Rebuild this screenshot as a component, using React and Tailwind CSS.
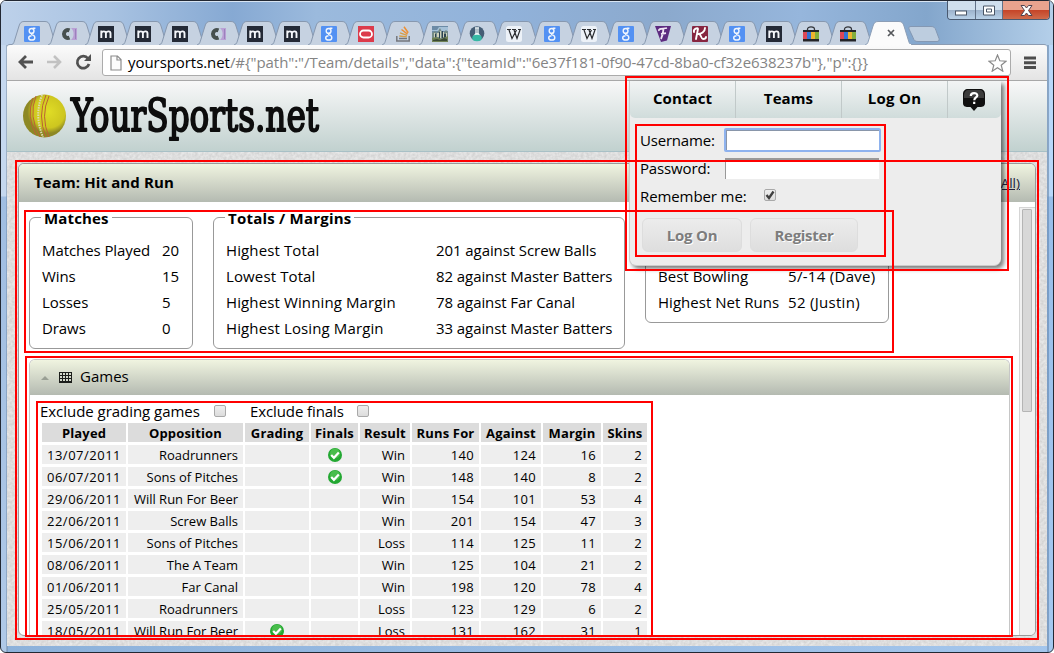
import React from "react";

const tabIcons = ["g", "c", "m", "m", "m", "c", "m", "m", "g", "o", "so", "pic", "flask", "w", "g", "w", "g", "f", "k", "g", "m", "shop", "shop"];

function Favicon({ kind }) {
  const svg = (children) => (
    <svg width="16" height="16" viewBox="0 0 16 16" className="block">
      {children}
    </svg>
  );
  if (kind === "g")
    return svg(
      <>
        <rect width="16" height="16" rx="1" fill="#5391f3" />
        <g fill="none" stroke="#f0f5fd" strokeWidth="1.4">
          <ellipse cx="7.6" cy="4.9" rx="2.4" ry="2.4" />
          <path d="M8.600 2.300h2.800M9.400 6.800C7 8 7 8.500 8.800 9.200c3 1.100 2.600 4.800-1 4.800-4 0-4.200-3.700-.3-4.200" />
        </g>
      </>
    );
  if (kind === "c")
    return svg(
      <>
        <path d="M10 2h6v12h-6c3.500-3 3.500-9 0-12z" fill="#b9a0d4" />
        <path d="M14.500 3v10" stroke="#9c80bd" />
        <path d="M8.500 4.300A4 4 0 1 0 8.500 11.700" fill="none" stroke="#47504f" strokeWidth="4" />
      </>
    );
  if (kind === "m")
    return svg(
      <>
        <rect width="16" height="16" fill="#242a36" />
        <path d="M3.300 12V4.500M3.300 7C4.500 4.800 7.500 4.800 7.900 7v5M7.900 7C9 4.800 12.500 4.800 12.500 7.500V12" fill="none" stroke="#f4f6fa" strokeWidth="1.900" />
      </>
    );
  if (kind === "o")
    return svg(
      <>
        <rect width="16" height="16" fill="#dc3b4b" />
        <rect x="2" y="4.500" width="12" height="7" rx="3.500" fill="none" stroke="#fff" strokeWidth="1.800" />
      </>
    );
  if (kind === "so")
    return svg(
      <>
        <path d="M1.800 10v5h12.400v-5" fill="none" stroke="#74777c" strokeWidth="1.500" />
        <path d="M4 12.500h8" stroke="#74777c" strokeWidth="1.700" />
        <path d="M4.300 10l7.600.9M5 6.900l7.100 2.500" stroke="#d59e49" strokeWidth="1.400" />
        <path d="M6.500 3.500l6 4.600M9 .7l4.200 6" stroke="#ed9034" strokeWidth="1.500" />
      </>
    );
  if (kind === "pic")
    return svg(
      <>
        <rect width="16" height="16" fill="#6c8ba6" />
        <path d="M0 4h5l2-3h9v4H0z" fill="#a5c1d8" />
        <path d="M0 7l3-2 2 2 3-5 2 4h2l2-2 2 2v10H0z" fill="#758b86" />
        <path d="M2 7h1v6H2zM5 7h2v4H5zM8 5h1v7H8zM11 6h1v5h-1zM14 7h1v4h-1z" fill="#cdd1bb" />
        <path d="M3 8h1v4H3zM7 6h1v7H7zM10 5h1v7h-1zM12 8h2v5h-2z" fill="#2c4352" />
        <path d="M0 12l4-1 5 2 7-3v6H0z" fill="#6f8155" />
        <path d="M1 14l4-1 3 1 4-2 3 1v2H1z" fill="#3a4a36" />
      </>
    );
  if (kind === "flask")
    return svg(
      <>
        <circle cx="8" cy="7.500" r="7.300" fill="#455d75" />
        <path d="M6 1.800h4M7 2.500v5L4.500 11M9 2.500v5l2.500 3.500" fill="none" stroke="#edf6f7" strokeWidth="1.300" />
        <path d="M7.200 7h1.600l2.500 4H4.700z" fill="#edf6f7" />
        <ellipse cx="8" cy="12" rx="4.800" ry="3.200" fill="#36b8a4" />
      </>
    );
  if (kind === "w")
    return svg(
      <>
        <rect width="16" height="16" rx="2.500" fill="#edf2f8" />
        <path d="M1 3.500h4M6 3.500h4M12 3.500h3M3 4l3 8.500L10.500 4M8 4l3 8.500L14 4" fill="none" stroke="#292b2f" strokeWidth="1.200" />
      </>
    );
  if (kind === "f")
    return svg(
      <>
        <path d="M0 0h16l-4 14.500-6 1.500z" fill="#5d2b80" />
        <path d="M4 5c-1-3 4-2 8-3M8.500 3C8 8 7 11 6 13M6 8l5-.800" fill="none" stroke="#f0e6f5" strokeWidth="1.800" />
      </>
    );
  if (kind === "k")
    return svg(
      <>
        <rect width="16" height="16" rx="1" fill="#872540" />
        <path d="M2 6C1 3 6 1 6 3L4 13M13 2C13 6 9 8 6 8M7 8c2 0 2 5 4 5s3-1 3-2" fill="none" stroke="#fff" strokeWidth="1.900" strokeLinecap="round" />
      </>
    );
  return svg(
    <>
      <path d="M4.500 5V3.500C4.500 0 11.500 0 11.500 3.500V5" fill="none" stroke="#34363c" strokeWidth="1.300" />
      <path d="M0 4h16v11.500H0z" fill="#242529" />
      <path d="M0 6h4v7H0z" fill="#dd4856" />
      <path d="M4 6h4v7H4z" fill="#3374d6" />
      <path d="M8 6h4v7H8z" fill="#eeb42e" />
      <path d="M12 6h4v7h-4z" fill="#83ae3c" />
    </>
  );
}

function Tab({ kind, active }) {
  return (
    <div className={active ? "relative z-10 -mr-[4px] h-6 w-[47px] shrink-0" : "relative -mr-[9.9px] h-6 w-[47px] shrink-0"}>
      <svg width="47" height="24" viewBox="0 0 47 24" className="absolute inset-0">
        <path
          d="M0 24C3 23 3 21 4 18L8 5C9 2 10 .500 13 .500H34C37 .500 38 2 39 5L43 18C44 21 44 23 47 24"
          fill={active ? "#fbfbfb" : "#c6d2e1"}
          stroke={active ? "#8c9eb6" : "#8798af"}
          strokeWidth="1"
        />
        {active && <path d="M2 24h44" stroke="#fbfbfb" strokeWidth="2" />}
      </svg>
      <div className="relative flex h-full items-center pl-[13px] pt-px">
        {active ? (
          <svg width="8" height="8" viewBox="0 0 8 8" className="ml-[9px] -mt-px">
            <path d="M1 1l6 6M7 1l-6 6" stroke="#55575b" strokeWidth="1.700" />
          </svg>
        ) : (
          <Favicon kind={kind} />
        )}
      </div>
    </div>
  );
}

function TitleBar() {
  return (
    <div className="flex h-[44px] items-end bg-[linear-gradient(90deg,#bdd1ea_0%,#a9c3e2_10%,#86a9d3_22%,#9bbadd_30%,#91b2da_48%,#8ba9cd_63%,#96b6dc_76%,#83a6cc_88%,#b4cfe9_100%)] pl-[10px] shadow-[inset_0_1px_0_#d8e5f3]">
      <div className="flex flex-1">
        {tabIcons.map((kind, i) => (
          <Tab kind={kind} key={i} />
        ))}
        <Tab active />
        <svg width="32" height="16" viewBox="0 0 32 16" className="mt-[5px] shrink-0">
          <path d="M3 .500h20c3 0 4 1 5 4l3 8c.500 2-.500 3-2 3H10c-3 0-4-1-5-4L1 3C.500 1.500 1 .500 3 .500z" fill="#bdcddf" stroke="#8498b3" />
        </svg>
      </div>
      <div className="mr-[3px] flex h-[19px] w-[103px] shrink-0 self-start overflow-hidden rounded-b-[4px] border border-t-0 border-[#49596f] -ml-[103px]">
        <div className="flex w-7 items-center justify-center border-r border-[#617187] bg-[linear-gradient(#d0dfed_0_48%,#9cb2cb_50%,#b9d1e8)] pt-[6px]">
          <svg width="13" height="6"><rect x=".500" y="1" width="11" height="4" fill="#fff" stroke="#4a5666" /></svg>
        </div>
        <div className="flex w-[27px] items-center justify-center border-r border-[#617187] bg-[linear-gradient(#d0dfed_0_48%,#9cb2cb_50%,#b9d1e8)] pt-px">
          <svg width="13" height="11"><path d="M.500 1h11v9H.500zM3.500 4h5v3h-5z" fill="#fff" stroke="#4a5666" /></svg>
        </div>
        <div className="flex flex-1 items-center justify-center bg-[linear-gradient(#e9a38e_0_48%,#c54327_50%,#cf6b4b)] pt-px">
          <svg width="13" height="11" viewBox="0 0 13 11">
            <path d="M1 .500h3.500l2 2.500 2-2.500H12L8.500 5.500 12 10.500H8.500l-2-2.500-2 2.500H1L4.500 5.500z" fill="#fff" stroke="#50434f" />
          </svg>
        </div>
      </div>
    </div>
  );
}

function Toolbar() {
  return (
    <div className="flex h-[37px] items-start rounded-t-[3px] border-b border-t border-b-[#a8a8a8] border-t-[#8b9bb1] bg-[linear-gradient(#fbfbfb,#e4e4e4)] pl-[10px] pt-[4px]">
      <svg width="76" height="26" viewBox="0 0 76 26" fill="none" className="mr-[9px]">
        <path d="M16 13H3M9 7l-6 6 6 6" stroke="#515151" strokeWidth="2.800" />
        <path d="M30 13h13M37 7l6 6-6 6" stroke="#c2c2c2" strokeWidth="2.600" />
        <path d="M71 9.500A6 6 0 1 0 72 15" stroke="#515151" strokeWidth="2.700" />
        <path d="M74 5v7h-7z" fill="#515151" />
      </svg>
      <div className="flex h-[27px] w-[909px] items-center rounded-[3px] border border-[#ababab] bg-white pl-[7px] pr-[3px]">
        <svg width="12" height="16" viewBox="0 0 12 16" className="mr-[6px]">
          <path d="M1 1h6.500L11 4.500V15H1zM7 1v4h4" fill="#fcfcfc" stroke="#8c8c8c" strokeWidth="1.200" />
        </svg>
        <span className="flex-1 whitespace-pre pb-[2px] text-[15px] leading-[20px] tracking-[-0.060px] text-[#848484]">
          <span className="text-black">yoursports.net</span>
          {'/#{"path":"/Team/details","data":{"teamId":"6e37f181-0f90-47cd-8ba0-cf32e638237b"},"p":{}}'}
        </span>
        <svg width="19" height="18" viewBox="0 0 19 18">
          <path d="M9.500 1l2.300 5.800 6.200.400-4.800 4 1.600 6-5.300-3.400-5.300 3.400 1.600-6-4.800-4 6.200-.400z" fill="#fff" stroke="#8a8a8a" strokeWidth="1.200" />
        </svg>
      </div>
      <svg width="14" height="14" className="ml-[12px] mt-[7px]">
        <path d="M1 2h12M1 6.800h12M1 11.600h12" stroke="#4d4d4d" strokeWidth="3" />
      </svg>
    </div>
  );
}

function SiteHeader() {
  return (
    <header className="relative flex h-[71px] items-start border-b border-[#a8c0c6] bg-[linear-gradient(#f8f8f8,#c1d1cf)] pl-4 pt-[13px]">
      <svg width="310" height="56" viewBox="0 0 310 56">
        <defs>
          <radialGradient id="ball" cx=".6" cy=".4">
            <stop offset="0" stopColor="#e0dc26" />
            <stop offset=".75" stopColor="#cdc61f" />
            <stop offset="1" stopColor="#8d8824" />
          </radialGradient>
          <filter id="worn" x="-5%" y="-10%" width="110%" height="120%">
            <feTurbulence type="fractalNoise" baseFrequency=".5" numOctaves="2" result="n" />
            <feDisplacementMap in="SourceGraphic" in2="n" scale="1.500" xChannelSelector="R" yChannelSelector="G" />
          </filter>
        </defs>
        <circle cx="21.500" cy="22" r="21.500" fill="url(#ball)" />
        <g fill="none">
          <path d="M10 4Q3 22 13 41M13 2Q5 22 17 43M23 1Q14 22 23 43M26 2Q17 22 26 43" stroke="#bc6135" strokeWidth="1" />
          <path d="M19 1Q11 22 20 43" stroke="#ddd9b2" strokeWidth="2" strokeDasharray="1.500 1" />
        </g>
        <text x="48" y="37" fontFamily="DejaVu Serif" fontSize="44" textLength="248" lengthAdjust="spacingAndGlyphs" fill="#080808" stroke="#080808" strokeWidth="2" strokeLinejoin="round" filter="url(#worn)">YourSports.net</text>
      </svg>
    </header>
  );
}

function StatBox({ title, rows, className, first, second = "", legend = "" }) {
  return (
    <fieldset className={"rounded-[6px] border border-[#999] pl-3 " + className}>
      {title && <legend className={"-ml-px h-[16px] whitespace-nowrap px-[3px] text-[15px] font-bold leading-[18px] " + legend}>{title}</legend>}
      <div className={title ? "mt-[12px]" : "mt-[53px]"}>
        {rows.map(([a, b], i) => (
          <div key={i} className="flex h-[26px] items-center whitespace-nowrap text-[15px]">
            <span className={first}>{a}</span>
            <span className={second}>{b}</span>
          </div>
        ))}
      </div>
    </fieldset>
  );
}

function Tick() {
  return (
    <svg width="16" height="16" viewBox="0 0 16 16" className="inline-block">
      <circle cx="8" cy="8" r="7" fill="#23a832" />
      <circle cx="8" cy="6.500" r="5" fill="#49bd4c" />
      <path d="M4.200 8l2.700 2.800L11.800 5.500" fill="none" stroke="#fff" strokeWidth="2.200" />
    </svg>
  );
}

function Check({ checked }) {
  return (
    <span className="mb-[2px] inline-flex h-3 w-3 shrink-0 items-center justify-center rounded-[2px] border border-[#a9a9a9] bg-[linear-gradient(#eee,#dcdcdc)]">
      {checked && (
        <svg width="10" height="10" viewBox="0 0 10 10">
          <path d="M1.500 5l2.500 3L8.500 1.500" fill="none" stroke="#3f3f3f" strokeWidth="2.300" />
        </svg>
      )}
    </span>
  );
}

const columns = ["Played", "Opposition", "Grading", "Finals", "Result", "Runs For", "Against", "Margin", "Skins"];
const games = [
  ["13/07/2011", "Roadrunners", "", "t", "Win", 140, 124, 16, 2],
  ["06/07/2011", "Sons of Pitches", "", "t", "Win", 148, 140, 8, 2],
  ["29/06/2011", "Will Run For Beer", "", "", "Win", 154, 101, 53, 4],
  ["22/06/2011", "Screw Balls", "", "", "Win", 201, 154, 47, 3],
  ["15/06/2011", "Sons of Pitches", "", "", "Loss", 114, 125, 11, 2],
  ["08/06/2011", "The A Team", "", "", "Win", 125, 104, 21, 2],
  ["01/06/2011", "Far Canal", "", "", "Win", 198, 120, 78, 4],
  ["25/05/2011", "Roadrunners", "", "", "Loss", 123, 129, 6, 2],
  ["18/05/2011", "Will Run For Beer", "t", "", "Loss", 131, 162, 31, 1],
];

function cellClass(i) {
  if (i === 2 || i === 3) return "flex items-center justify-center";
  if (i === 0) return "pr-[5px] text-right tracking-[0.5px]";
  if (i > 4) return "pr-[5px] text-right tracking-[0.35px]";
  return "pr-[5px] text-right";
}

function Games() {
  return (
    <section className="mt-[10px] w-[981px] rounded-t-[6px] border border-b-0 border-[#c6c6c6]">
      <h2 className="flex h-[35px] items-center rounded-t-[5px] bg-[linear-gradient(#f0f4e0,#b4bab1)] pl-[11px] text-[15px]">
        <svg width="8" height="4" className="mr-[10px]"><path d="M0 4l4-4 4 4z" fill="#999f94" /></svg>
        <svg width="13" height="11" className="mr-[8px]">
          <rect width="13" height="11" fill="#1c1e1b" />
          <path d="M1 1h2v2H1zM4 1h2v2H4zM7 1h2v2H7zM10 1h2v2h-2zM1 4h2v2H1zM4 4h2v2H4zM7 4h2v2H7zM10 4h2v2h-2zM1 7h2v2H1zM4 7h2v2H4zM7 7h2v2H7zM10 7h2v2h-2z" fill="#d5dacc" />
        </svg>
        <span className="pb-[2px]">Games</span>
      </h2>
      <div className="pl-[10px] pt-[7px]">
        <div className="flex h-[19px] items-center text-[15px] leading-[19px]">
          <span className="w-[174px] tracking-[-0.040px]">Exclude grading games</span>
          <Check />
          <span className="ml-6 w-[107px] tracking-[-0.100px]">Exclude finals</span>
          <Check />
        </div>
        <div className="ml-[2px] mt-[2px] grid w-[605px] grid-cols-[84px_115px_64px_47px_50px_67px_60px_58px_44px] gap-x-[2px] gap-y-[3px] text-[13px] leading-[21px]">
          {columns.map((c) => (
            <div key={c} className="h-[19px] whitespace-nowrap bg-[#dcdcdc] text-center font-bold tracking-[0.15px]">{c}</div>
          ))}
          {games.map((row, r) =>
            row.map((v, i) => (
              <div key={r + "-" + i} className={"h-[19px] whitespace-nowrap bg-[#eee] " + cellClass(i)}>
                {v === "t" ? <Tick /> : v}
              </div>
            ))
          )}
        </div>
      </div>
    </section>
  );
}

function TeamPanel() {
  return (
    <main className="relative mx-[11px] mt-[11px] h-[473px] w-[1018px] overflow-hidden rounded-[6px] border border-[#999] bg-white">
      <div className="flex h-[38px] items-center justify-between bg-[linear-gradient(#f0f4e0,#b4bab1)] pl-[15px] pr-[15px] text-[15px]">
        <h1 className="pb-[2px] font-bold tracking-[0.120px]">Team: Hit and Run</h1>
        <a className="pt-px text-[13.5px] text-[#20203a] underline">(All)</a>
      </div>
      <div className="flex justify-between">
        <div className="h-[434px] overflow-hidden pl-[10px] pt-[7px]">
          <div className="flex items-start">
            <StatBox title="Matches" legend="tracking-[0.150px]" className="mr-5 h-[140px] w-[164px]" first="w-[120px] tracking-[-0.080px]" rows={[["Matches Played", 20], ["Wins", 15], ["Losses", 5], ["Draws", 0]]} />
            <StatBox title="Totals / Margins" legend="tracking-[0.220px]" className="mr-5 h-[140px] w-[412px]" first="w-[210px] tracking-[0.120px]" second="tracking-[-0.080px]" rows={[["Highest Total", "201 against Screw Balls"], ["Lowest Total", "82 against Master Batters"], ["Highest Winning Margin", "78 against Far Canal"], ["Highest Losing Margin", "33 against Master Batters"]]} />
            <StatBox className="h-[114px] w-[244px]" first="w-[130px] tracking-[0.030px]" second="tracking-[0.300px]" rows={[["Best Bowling", "5/-14 (Dave)"], ["Highest Net Runs", "52 (Justin)"]]} />
          </div>
          <Games />
        </div>
        <div className="mt-[5px] h-[428px] w-[16px] border-l border-t border-[#d5d5d5] bg-[#f1f1f1] pl-[2px] pt-px">
          <div className="h-[203px] w-[10px] rounded-[1px] border border-[#b5b5b5] bg-[#d8d8d8]" />
        </div>
      </div>
    </main>
  );
}

function LogonMenu() {
  const tab = "flex items-center justify-center border-r border-[#c1c9c9] pb-[2px] text-[15px] font-bold";
  return (
    <aside className="absolute left-[629px] top-[81px] h-[185px] w-[372px] rounded-b-[7px] border-b border-l border-[#ccc] bg-[#ededed] shadow-[3px_3px_4px_rgba(0,0,0,0.5)]">
      <nav className="flex h-[37px] rounded-b-[5px] bg-[linear-gradient(#f2f4f4,#d0dcdb)]">
        <a className={tab + " w-[106px] tracking-[0.100px]"}>Contact</a>
        <a className={tab + " w-[106px] tracking-[0.100px]"}>Teams</a>
        <a className={tab + " w-[106px] tracking-[0.300px]"}>Log On</a>
        <a className="flex flex-1 items-center justify-center pr-[2px]">
          <svg width="22" height="22" viewBox="0 0 22 22">
            <path d="M5 0h12c3 0 5 2 5 5v9c0 3-2 4-5 4h-2.500L11 22l-3.500-4H5c-3 0-5-1-5-4V5c0-3 2-5 5-5z" fill="#101010" />
            <path d="M1 6c0-3 2-5 4-5h12c2 0 4 2 4 5v3H1z" fill="#3c3c3c" />
            <path d="M7.800 7c0-4 6.500-3.600 6.500-.600 0 2-3 2.200-3 4.800M11.200 12.800v2.200" fill="none" stroke="#fff" strokeWidth="2.200" />
          </svg>
        </a>
      </nav>
      <form className="pl-[10px] pt-[8px] text-[15px]">
        <div className="flex h-7 items-center">
          <label className="w-[84px] tracking-[-0.200px]">Username:</label>
          <div className="h-[24px] w-[157px] rounded-[2px] border-2 border-[#8eb2ee] bg-white shadow-[inset_1px_1px_0_#8996aa]" />
        </div>
        <div className="flex h-7 items-center">
          <label className="w-[85px] tracking-[-0.150px]">Password:</label>
          <div className="h-[21px] w-[154px] border-l border-t-2 border-[#999] bg-white" />
        </div>
        <div className="flex h-7 items-center">
          <label className="w-[124px] tracking-[-0.100px]">Remember me:</label>
          <Check checked />
        </div>
        <div className="mt-[8px] flex gap-2 pl-[2px] font-bold text-[#7d7d7d]">
          <div className="flex h-[34px] w-[100px] items-center justify-center rounded-[6px] border border-[#ddd] bg-[linear-gradient(#ececec,#dedede)] tracking-[-0.2px] [text-shadow:1px_1px_0_#fff]">Log On</div>
          <div className="flex h-[34px] w-[108px] items-center justify-center rounded-[6px] border border-[#ddd] bg-[linear-gradient(#ececec,#dedede)] tracking-[-0.3px] [text-shadow:1px_1px_0_#fff]">Register</div>
        </div>
      </form>
    </aside>
  );
}

export default function App() {
  return (
    <div className="relative h-[653px] w-[1054px] overflow-hidden rounded-[6px] border border-[#222833] bg-[linear-gradient(90deg,#c5d8ef_0_5px,#76899e_6px,#9abbdf_7px,#b6d4f5_1046px,#5b7593_1047px,#b8d8fa_1048px)] font-['Open_Sans','Noto_Sans',sans-serif] text-black">
      <div className="-m-px flex h-[653px] flex-col bg-[linear-gradient(transparent_0_196px,rgba(90,140,200,0.35)_197px,rgba(90,140,200,0.2)_100%)] px-[7px] pt-px">
        <div className="-mx-[6px] -mt-px pt-px"><TitleBar /></div>
        <div className="-mt-px flex h-[602px] w-[1040px] flex-col">
          <Toolbar />
          <SiteHeader />
          <div className="relative flex-1 overflow-hidden bg-[#dfdfdf]">
            <svg width="1040" height="494" className="absolute inset-0">
              <filter id="paper" x="0" y="0" width="100%" height="100%" colorInterpolationFilters="sRGB">
                <feTurbulence type="fractalNoise" baseFrequency=".35" numOctaves="2" />
                <feColorMatrix values=".14 0 0 0 .8 .14 0 0 0 .8 .14 0 0 0 .8 0 0 0 0 1" />
              </filter>
              <rect width="1040" height="494" filter="url(#paper)" />
            </svg>
            <TeamPanel />
          </div>
        </div>
      </div>
      <div className="absolute -left-px -top-px h-[653px] w-[1054px]">
        <LogonMenu />
        <div className="absolute left-[625px] top-[76px] h-[195px] w-[384px] border-2 border-[#f00]" />
        <div className="absolute left-[635px] top-[124px] h-[133px] w-[251px] border-2 border-[#f00]" />
        <div className="absolute left-[15px] top-[160px] h-[480px] w-[1024px] border-2 border-[#f00]" />
        <div className="absolute left-[24px] top-[210px] h-[143px] w-[870px] border-2 border-[#f00]" />
        <div className="absolute left-[25px] top-[356px] h-[281px] w-[988px] border-2 border-[#f00]" />
        <div className="absolute left-[36px] top-[401px] h-[236px] w-[617px] border-2 border-[#f00]" />
      </div>
    </div>
  );
}
